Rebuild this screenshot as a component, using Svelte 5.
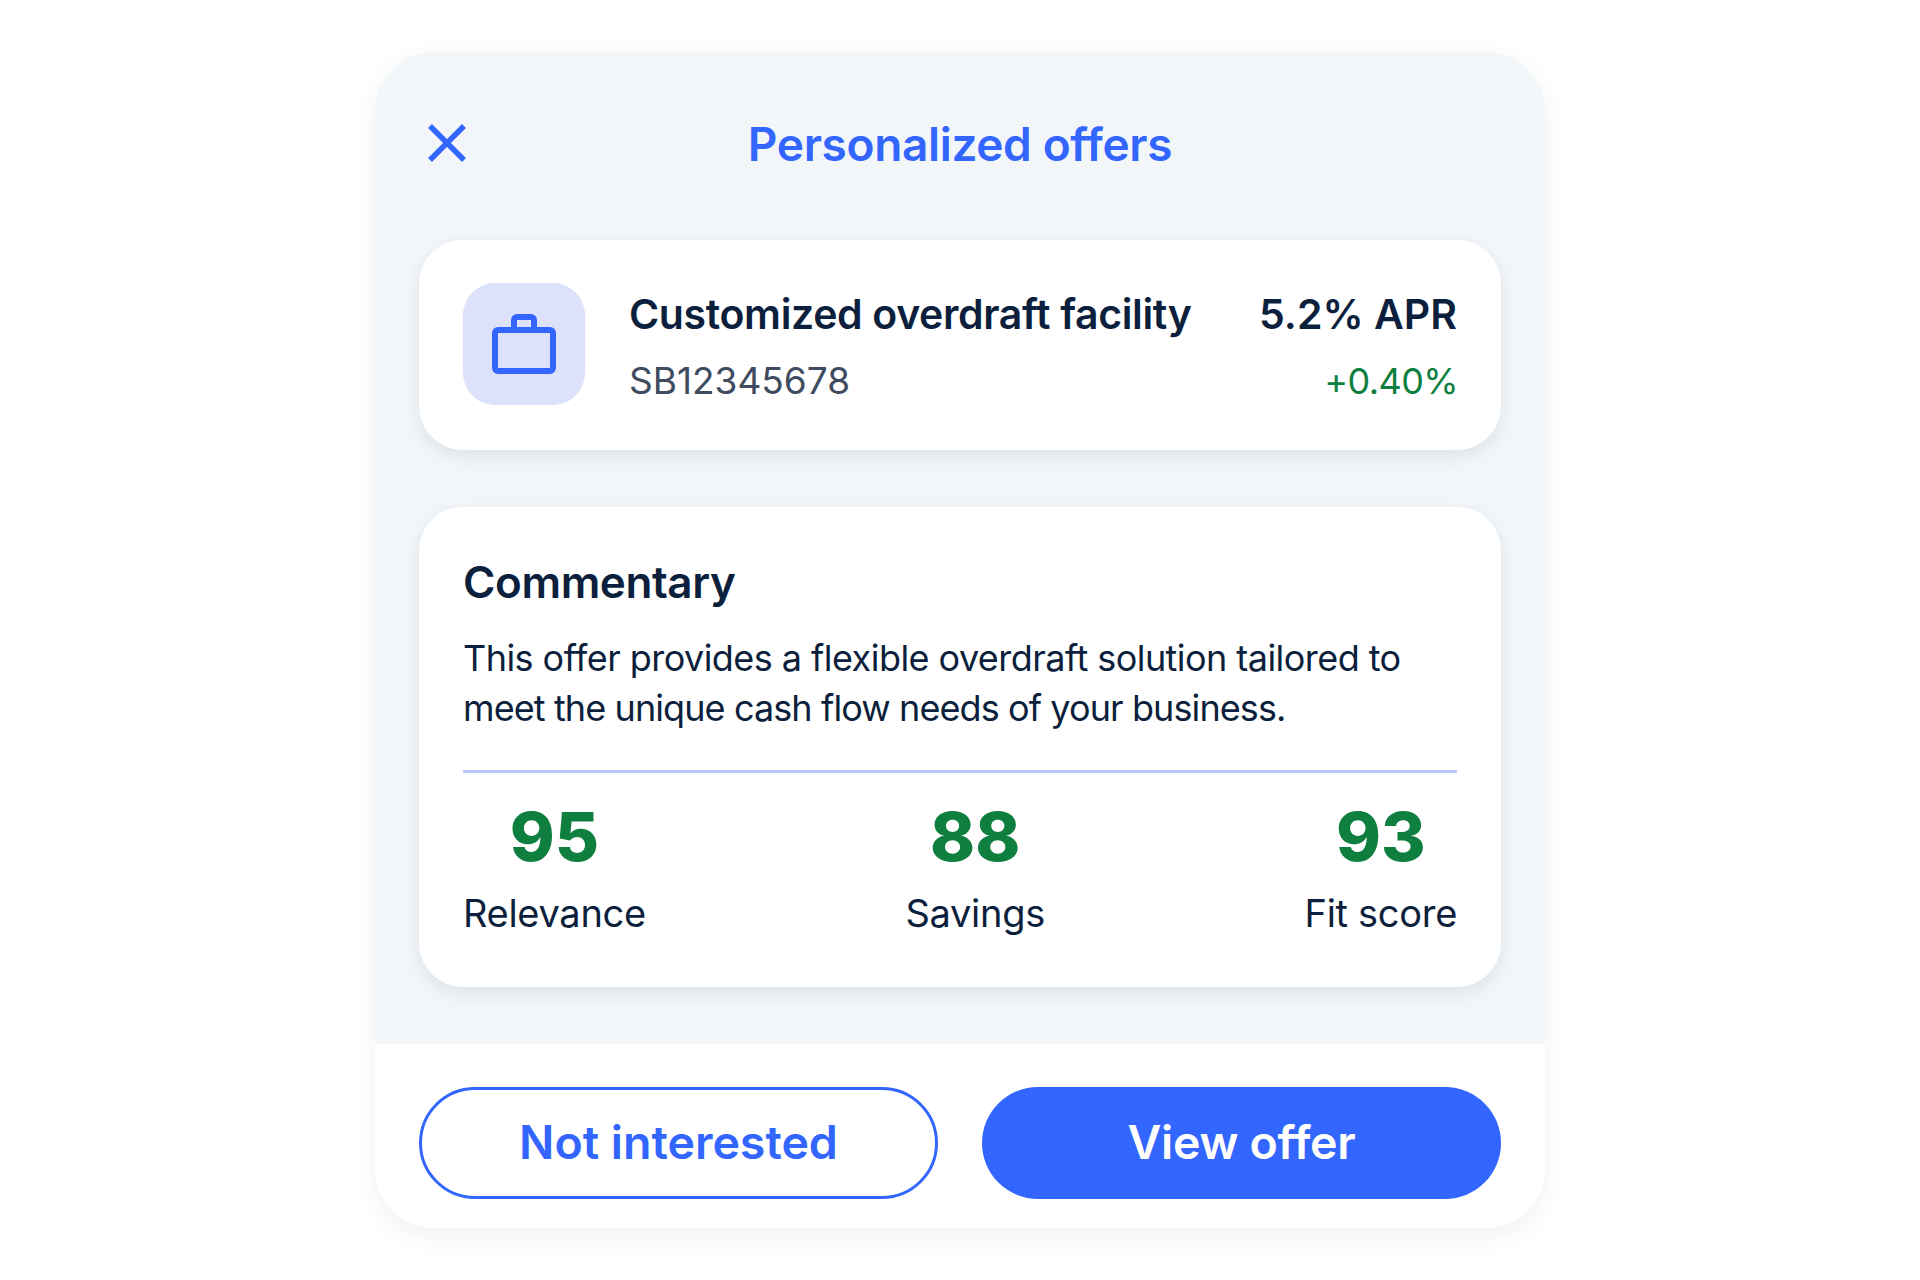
<script lang="ts">
  // Stats shown under the commentary
  const stats = [
    { value: 95, label: "Relevance" },
    { value: 88, label: "Savings" },
    { value: 93, label: "Fit score" },
  ];
</script>

<main class="page">
  <section class="modal">
    <div class="content">
      <header class="header">
        <button class="close" aria-label="Close">
          <svg width="38" height="38" viewBox="0 0 38 38" fill="none">
            <path d="M2 2L36 36M36 2L2 36" stroke="#3366ff" stroke-width="5.5" />
          </svg>
        </button>
        <h1>Personalized offers</h1>
      </header>

      <article class="card offer">
        <div class="icon-box">
          <svg width="64" height="60" viewBox="0 0 64 60" fill="none" stroke="#3366ff" stroke-width="6" stroke-linejoin="round">
            <rect x="3" y="16" width="58" height="41" rx="3" />
            <path d="M22 16V6a3 3 0 0 1 3-3h14a3 3 0 0 1 3 3v10" />
          </svg>
        </div>
        <div class="offer-text">
          <div class="row">
            <span class="strong">Customized overdraft facility</span>
            <span class="strong apr">5.2% APR</span>
          </div>
          <div class="row">
            <span class="code">SB12345678</span>
            <span class="delta">+0.40%</span>
          </div>
        </div>
      </article>

      <article class="card commentary">
        <h2>Commentary</h2>
        <p>
          <span class="line first">This offer provides a flexible overdraft solution tailored to</span>
          <span class="line second">meet the unique cash flow needs of your business.</span>
        </p>
        <div class="stats">
          {#each stats as stat}
            <div class="stat">
              <span class="value">{stat.value}</span>
              <span class="label">{stat.label}</span>
            </div>
          {/each}
        </div>
      </article>
    </div>

    <footer class="footer">
      <button class="btn outline">Not interested</button>
      <button class="btn solid">View offer</button>
    </footer>
  </section>
</main>

<style>
  :global(body) {
    background: #fff;
  }

  .page {
    display: flex;
    justify-content: center;
    height: 1280px;
    padding-top: 52px;
    box-sizing: border-box;
    font-family: "Inter", "Liberation Sans", sans-serif;
    color: #0c1f3c;
  }

  .modal {
    width: 1170px;
    height: 1176px;
    border-radius: 60px;
    background: #fff;
    overflow: hidden;
    box-shadow: 0 8px 24px rgba(40, 60, 90, 0.07);
    display: flex;
    flex-direction: column;
  }

  .content {
    flex: 1;
    background: #f2f6f9;
    padding: 0 44px;
    display: flex;
    flex-direction: column;
    gap: 57px;
  }

  .header {
    height: 188px;
    box-sizing: border-box;
    padding-bottom: 5px;
    margin-bottom: -57px;
    display: flex;
    align-items: center;
    justify-content: center;
    position: relative;
  }

  .close {
    position: absolute;
    left: 9px;
    top: 72px;
    padding: 0;
    border: 0;
    background: none;
    display: flex;
  }

  h1 {
    margin: 0;
    font-size: 46px;
    font-weight: 600;
    letter-spacing: -0.35px;
    color: #3366ff;
  }

  .card {
    background: #fff;
    border-radius: 44px;
    box-shadow: 0 6px 16px rgba(40, 60, 90, 0.1);
  }

  .offer {
    height: 210px;
    padding: 0 44px 2px;
    box-sizing: border-box;
    display: flex;
    align-items: center;
    gap: 44px;
  }

  .icon-box {
    width: 122px;
    height: 122px;
    border-radius: 32px;
    background: #dde1fb;
    display: flex;
    align-items: center;
    justify-content: center;
  }

  .icon-box svg {
    margin-bottom: 1px;
  }

  .offer-text {
    flex: 1;
    display: flex;
    flex-direction: column;
    gap: 23px;
    padding-top: 6px;
  }

  .row {
    display: flex;
    justify-content: space-between;
    align-items: center;
    height: 44px;
  }

  .strong {
    font-size: 41px;
    font-weight: 600;
    letter-spacing: -0.35px;
  }

  .apr {
    letter-spacing: 0;
  }

  .code {
    font-size: 37px;
    color: #3f4b5e;
  }

  .delta {
    font-size: 36px;
    color: #0f7f3f;
    letter-spacing: -0.6px;
    margin-right: -1px;
  }

  .commentary {
    height: 480px;
    padding: 50px 44px 0;
    box-sizing: border-box;
  }

  h2 {
    margin: 0 0 26px;
    font-size: 44px;
    font-weight: 600;
    line-height: 50px;
    letter-spacing: -0.4px;
  }

  p {
    margin: 0;
    font-size: 36px;
    line-height: 50px;
    padding-bottom: 37px;
    border-bottom: 3px solid #b9c6fb;
  }

  .line {
    display: block;
  }

  .first {
    letter-spacing: -0.55px;
  }

  .second {
    letter-spacing: -0.9px;
  }

  .stats {
    display: flex;
    justify-content: space-between;
    margin-top: 23px;
  }

  .stat {
    display: flex;
    flex-direction: column;
    align-items: center;
    gap: 13px;
  }

  .value {
    font-size: 68px;
    font-weight: 800;
    line-height: 80px;
    color: #0f7f3f;
  }

  .label {
    font-size: 38px;
    line-height: 48px;
    letter-spacing: -0.3px;
  }

  .footer {
    height: 184px;
    box-sizing: border-box;
    padding: 43px 44px 29px;
    display: grid;
    grid-template-columns: 1fr 1fr;
    gap: 44px;
    background: #fff;
  }

  .btn {
    border-radius: 56px;
    font-family: inherit;
    font-size: 46.5px;
    font-weight: 600;
    padding: 0 0 2px;
  }

  .outline {
    background: #fff;
    color: #3366ff;
    border: 3px solid #3366ff;
  }

  .solid {
    background: #3366ff;
    color: #fff;
    border: 0;
    letter-spacing: -0.3px;
  }
</style>
